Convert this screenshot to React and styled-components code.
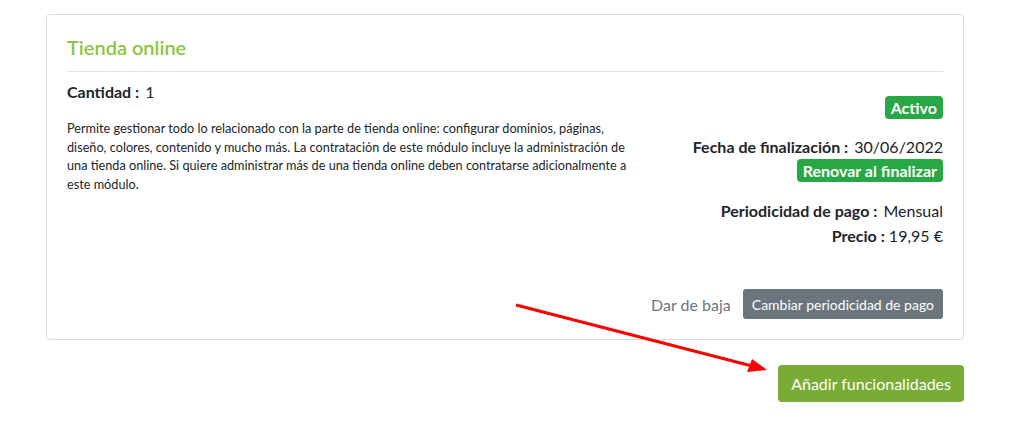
import React from "react";
import styled, { createGlobalStyle } from "styled-components";

const GlobalStyle = createGlobalStyle`
    body {
        margin: 0;
        background: #fff;
        font-family: Lato, "Open Sans", sans-serif;
        color: #212529;
    }
`

const App = () => {
    return (
        <Page>
            <GlobalStyle />
            <Card>
                <Title>Tienda online</Title>
                <Row>
                    <LeftCol>
                        <Field>
                            <Label>Cantidad :</Label> 1
                        </Field>
                        <Description>
                            Permite gestionar todo lo relacionado con la parte de tienda online: configurar dominios, páginas,
                            diseño, colores, contenido y mucho más. La contratación de este módulo incluye la administración de
                            una tienda online. Si quiere administrar más de una tienda online deben contratarse adicionalmente a
                            este módulo.
                        </Description>
                    </LeftCol>
                    <RightCol>
                        <Badge>Activo</Badge>
                        <Field $top="17px">
                            <Label>Fecha de finalización :</Label> 30/06/2022
                        </Field>
                        <Badge $top="1px">Renovar al finalizar</Badge>
                        <Field $top="18px">
                            <Label>Periodicidad de pago :</Label> Mensual
                        </Field>
                        <Field $top="3px">
                            <Label $tight>Precio :</Label> 19,95 €
                        </Field>
                    </RightCol>
                </Row>
                <Actions>
                    <TextLink>Dar de baja</TextLink>
                    <GreyButton>Cambiar periodicidad de pago</GreyButton>
                </Actions>
            </Card>
            <Footer>
                <AddButton>Añadir funcionalidades</AddButton>
            </Footer>
            <Arrow width="1026" height="422" viewBox="0 0 1026 422">
                <line x1="516" y1="305" x2="752" y2="366" stroke="#ff0000" strokeWidth="3" />
                <polygon points="767,370 747,372 752,359" fill="#ff0000" />
            </Arrow>
        </Page>
    )
}

const Page = styled.div`
    position: relative;
    width: 918px;
    padding: 14px 0 0 46px;
`

const Card = styled.div`
    border: 1px solid #dcdcdc;
    border-radius: 4px;
    padding: 20px 20px 20px;
`

const Title = styled.h2`
    margin: 0;
    padding-bottom: 12px;
    border-bottom: 1px solid #e4e4e4;
    font-size: 20px;
    font-weight: 600;
    line-height: 24px;
    color: #8cc63f;
`

const Row = styled.div`
    display: flex;
    justify-content: space-between;
    padding-top: 9px;
`

const LeftCol = styled.div`
    width: 574px;
`

const RightCol = styled.div`
    display: flex;
    flex-direction: column;
    align-items: flex-end;
    padding-top: 15px;
`

const Field = styled.div`
    margin-top: ${props => props.$top || "0"};
    font-size: 16px;
    line-height: 22px;
`

const Label = styled.span`
    font-weight: 700;
    margin-right: ${props => (props.$tight ? "0" : "2px")};
`

const Description = styled.p`
    margin: 16px 0 0;
    font-size: 12.7px;
    line-height: 18.5px;
`

const Badge = styled.span`
    margin-top: ${props => props.$top || "0"};
    display: inline-block;
    padding: 3px 6px 2px;
    border-radius: 4px;
    background: #28a745;
    color: #fff;
    font-size: 16px;
    font-weight: 700;
    line-height: 18px;
`

const Actions = styled.div`
    display: flex;
    justify-content: flex-end;
    align-items: center;
    gap: 12px;
    margin-top: 42px;
`

const TextLink = styled.span`
    font-size: 16px;
    color: #6c757d;
`

const GreyButton = styled.button`
    height: 30px;
    padding: 0 9px;
    border: none;
    border-radius: 3px;
    background: #6c757d;
    color: #fff;
    font-family: Lato, sans-serif;
    font-size: 14px;
`

const Footer = styled.div`
    display: flex;
    justify-content: flex-end;
    margin-top: 25px;
`

const AddButton = styled.button`
    height: 37px;
    padding: 0 13px;
    border: none;
    border-radius: 4px;
    background: #78ac34;
    color: #fff;
    font-family: Lato, sans-serif;
    font-size: 16px;
`

const Arrow = styled.svg`
    position: absolute;
    left: 0;
    top: 0;
    pointer-events: none;
`

export default App;
